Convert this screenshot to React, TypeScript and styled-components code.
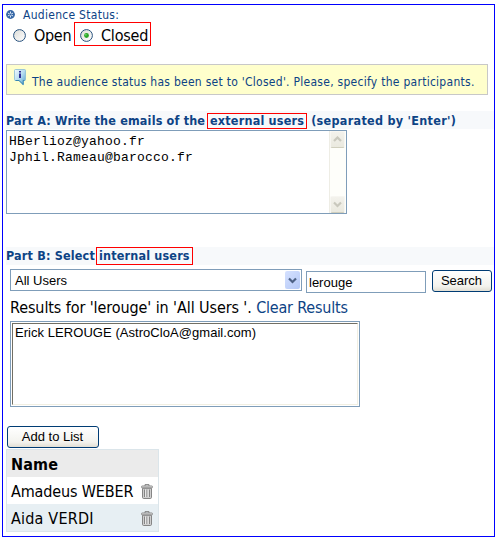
import React from 'react';
import styled, { createGlobalStyle } from 'styled-components';

const GlobalStyle = createGlobalStyle`
  * { box-sizing: border-box; }
  body { margin: 0; background: #fff; }
`;

const ui = '"DejaVu Sans Condensed", "DejaVu Sans", Tahoma, sans-serif';
const control = '"Liberation Sans", Arial, sans-serif';

const Frame = styled.main`
  width: 493px;
  height: 533px;
  margin: 4px 0 0 2px;
  border: 1px solid #0000ff;
  padding-left: 3px;
  overflow: hidden;
  font-family: ${ui};
  font-stretch: condensed;
  color: #000;
  white-space: pre;
`;

const StatusLabel = styled.div`
  display: flex;
  align-items: center;
  height: 17px;
  margin-top: 1px;
  gap: 8px;
  color: #0d4385;
`;

const Text = styled.span<{ $size?: number; $track?: number; $bold?: boolean; $link?: boolean }>`
  font-size: ${(p) => p.$size ?? 16}px;
  letter-spacing: ${(p) => p.$track ?? 0}px;
  font-weight: ${(p) => (p.$bold ? 700 : 400)};
  ${(p) => p.$link && 'color: #0d4385;'}
`;

const RadioRow = styled.div`
  display: flex;
  align-items: flex-start;
  height: 25px;
  margin-top: -1px;
  padding-left: 7px;
`;

const RadioOption = styled.label<{ $marked?: boolean; $width: number }>`
  display: flex;
  align-items: center;
  gap: 8px;
  width: ${(p) => p.$width}px;
  height: ${(p) => (p.$marked ? 24 : 27)}px;
  ${(p) => p.$marked && 'border: 1px solid #f00; padding: 3px 0 0 5px;'}
`;

const Notice = styled.section`
  display: flex;
  width: 482px;
  height: 31px;
  margin-top: 17px;
  padding: 4px 0 0 7px;
  gap: 5px;
  background: #ffffcc;
  border: 1px solid #c8c8c8;
  color: #0d4385;
  line-height: 26px;
`;

const Heading = styled.h2<{ $top: number; $height: number }>`
  display: flex;
  align-items: flex-end;
  width: 488px;
  height: ${(p) => p.$height}px;
  margin: ${(p) => p.$top}px 0 0;
  background: #f7f9fb;
  color: #0d4385;
  line-height: 16px;
`;

const Marked = styled.span<{ $width: number; $height: number }>`
  display: flex;
  align-items: center;
  width: ${(p) => p.$width}px;
  height: ${(p) => p.$height}px;
  padding-left: 2px;
  border: 1px solid #f00;
`;

const HeadPart = styled.span<{ $width?: number; $lift?: number }>`
  display: flex;
  height: ${(p) => 16 + (p.$lift ?? 0)}px;
  ${(p) => p.$width && `width: ${p.$width}px;`}
`;

const EmailBox = styled.div`
  display: flex;
  justify-content: space-between;
  width: 341px;
  height: 84px;
  margin-top: 1px;
  border: 1px solid #7f9db9;
`;

const Emails = styled.div`
  padding: 3px 0 0 2px;
  font: 13px/16px "Liberation Mono", "Courier New", monospace;
  letter-spacing: 0.2px;
`;

const ScrollTrack = styled.div`
  display: flex;
  flex-direction: column;
  justify-content: space-between;
  width: 17px;
  background: #fefefa;
  border-left: 1px solid #eeede5;
`;

const ScrollButton = styled.div`
  display: flex;
  align-items: center;
  justify-content: center;
  width: 15px;
  height: 17px;
  background: linear-gradient(#f3f2ec, #eae9df);
  border: 1px solid #f7f6f1;
  border-bottom-color: #d0cfbe;
  border-radius: 2px;
`;

const SearchRow = styled.div`
  display: flex;
  align-items: flex-start;
  height: 24px;
  margin-top: 4px;
  padding-left: 4px;
  font: 13px/20px ${control};
`;

const Select = styled.div`
  display: flex;
  justify-content: space-between;
  width: 292px;
  height: 22px;
  border: 1px solid #7f9db9;
  padding: 1px 1px 1px 4px;
`;

const SelectArrow = styled.span`
  display: flex;
  align-items: center;
  justify-content: center;
  width: 15px;
  height: 18px;
  border-radius: 2px;
  background: linear-gradient(135deg, #d5e1ff, #b4c8f6);
`;

const SearchField = styled.div`
  width: 120px;
  height: 22px;
  margin: 2px 6px 0 4px;
  padding: 1px 0 0 2px;
  border: 1px solid #7f9db9;
`;

const Button = styled.button<{ $width: number; $top: number }>`
  display: block;
  width: ${(p) => p.$width}px;
  height: 22px;
  margin: ${(p) => p.$top}px 0 0;
  padding: 0 1px 0 0;
  font: 13px/18px ${control};
  color: #000;
  border: 1px solid #003c74;
  border-radius: 3px;
  background: linear-gradient(#fff, #f3f3ee 75%, #e2dfd4);
`;

const Results = styled.div`
  height: 28px;
  padding-left: 4px;
  line-height: 30px;
`;

const ListBox = styled.div`
  width: 350px;
  height: 86px;
  margin: 0 0 19px 4px;
  padding: 1px;
  border: 1px solid #7f9db9;
`;

const ListInner = styled.div`
  height: 82px;
  padding: 0 0 0 2px;
  border: 1px solid #716f64;
  border-right-color: #f1efe2;
  border-bottom-color: #f1efe2;
  font: 13px/17px ${control};
  letter-spacing: 0.05px;
`;

const AddArea = styled.div`
  padding-left: 1px;
`;

const People = styled.div`
  width: 153px;
  height: 83px;
  margin-top: 1px;
  border: 1px solid #dbe5ea;
`;

const PersonRow = styled.div<{ $bg: string }>`
  display: flex;
  align-items: center;
  justify-content: space-between;
  height: 27px;
  padding: 1px 5px 0 4px;
  background: ${(p) => p.$bg};
`;

const Bullet = () => (
  <svg width="9" height="9" viewBox="0 0 9 9">
    <circle cx="4.5" cy="4.5" r="4.4" fill="#3566a5" />
    <path d="M4.5 1.5v6M1.9 3l5.2 3M7.1 3L1.9 6" stroke="#dce7f5" strokeWidth="1" />
    <circle cx="4.5" cy="4.5" r="1" fill="#3566a5" />
  </svg>
);

const Radio = ({ on }: { on?: boolean }) => (
  <svg width="13" height="13" viewBox="0 0 13 13">
    <defs>
      <linearGradient id="radioFace" x1="0" y1="0" x2="1" y2="1">
        <stop offset="0" stopColor="#dcdcd7" />
        <stop offset="1" stopColor="#fff" />
      </linearGradient>
    </defs>
    <circle cx="6.5" cy="6.5" r="5.9" fill="url(#radioFace)" stroke="#28527e" strokeWidth="1" />
    {on && <circle cx="6.5" cy="6.5" r="2.4" fill="#29a526" />}
    {on && <circle cx="5.8" cy="5.8" r="1" fill="#5fd15b" />}
  </svg>
);

const InfoIcon = () => (
  <svg width="13" height="17" viewBox="0 0 13 17">
    <defs>
      <linearGradient id="infoFace" x1="0" y1="0" x2="1" y2="1">
        <stop offset="0" stopColor="#f2faff" />
        <stop offset=".5" stopColor="#b5dcf0" />
        <stop offset="1" stopColor="#4d9cc8" />
      </linearGradient>
    </defs>
    <path d="M1.500 .5h9q1 0 1 1v9q0 1-1 1H9.300V16L5 11.500H1.500q-1 0-1-1v-9q0-1 1-1z" fill="url(#infoFace)" stroke="#86bbd6" strokeWidth=".8" />
    <path d="M1.500 11.500H5l4.200 4v-4h1.300" fill="none" stroke="#2c7fae" strokeWidth=".9" />
    <path d="M5 2h2v1.500H5zM5 4.500h2v4.500H5z" fill="#2f2f94" />
  </svg>
);

const Chevron = ({ up, color }: { up?: boolean; color: string }) => (
  <svg width="9" height="7" viewBox="0 0 9 7">
    <path d={up ? 'M1 5l3.500-3.500L8 5' : 'M1 1.500L4.500 5 8 1.500'} fill="none" stroke={color} strokeWidth="2.200" />
  </svg>
);

const Trash = () => (
  <svg width="12" height="15" viewBox="0 0 12 15">
    <path d="M4 2V.6h4V2" fill="none" stroke="#858585" />
    <rect x=".5" y="1.900" width="11" height="2" rx=".7" fill="#d0d0d0" stroke="#858585" strokeWidth=".8" />
    <path d="M1.500 4.300h9v9q0 1.200-1.200 1.200H2.700q-1.200 0-1.200-1.200z" fill="#cfcfcf" stroke="#858585" />
    <path d="M3.500 5.500v7.500M6 5.500v7.500M8.500 5.500v7.500" stroke="#7c7c7c" strokeWidth=".9" />
    <path d="M4.500 5.500v7.500M7 5.500v7.500" stroke="#eee" strokeWidth=".8" />
  </svg>
);

export default function App() {
  return (
    <>
      <GlobalStyle />
      <Frame>
        <StatusLabel>
          <Bullet />
          <Text $size={12} $track={0.28}>Audience Status:</Text>
        </StatusLabel>
        <RadioRow>
          <RadioOption $width={61}><Radio /><Text $track={-0.3}>Open</Text></RadioOption>
          <RadioOption $marked $width={77}><Radio on /><Text $track={-0.2}>Closed</Text></RadioOption>
        </RadioRow>
        <Notice>
          <InfoIcon />
          <Text $size={12} $track={0.27}>The audience status has been set to 'Closed'. Please, specify the participants.</Text>
        </Notice>
        <Heading $top={16} $height={18}>
          <HeadPart $width={201}><Text $bold $size={12.5} $track={0.17}>Part A: Write the emails of the</Text></HeadPart>
          <Marked $width={100} $height={16}><Text $bold $size={12.5} $track={0.2}>external users</Text></Marked>
          <HeadPart><Text $bold $size={12.5} $track={0.28}>{" (separated by 'Enter')"}</Text></HeadPart>
        </Heading>
        <EmailBox>
          <Emails>{'HBerlioz@yahoo.fr\nJphil.Rameau@barocco.fr'}</Emails>
          <ScrollTrack>
            <ScrollButton><Chevron up color="#c9c8bd" /></ScrollButton>
            <ScrollButton><Chevron color="#c9c8bd" /></ScrollButton>
          </ScrollTrack>
        </EmailBox>
        <Heading $top={33} $height={18}>
          <HeadPart $width={90} $lift={1}><Text $bold $size={12.5} $track={0.17}>Part B: Select</Text></HeadPart>
          <Marked $width={97} $height={18}><Text $bold $size={12.5} $track={0.17}>internal users</Text></Marked>
        </Heading>
        <SearchRow>
          <Select>All Users<SelectArrow><Chevron color="#4d6185" /></SelectArrow></Select>
          <SearchField>lerouge</SearchField>
          <Button $width={60} $top={1}>Search</Button>
        </SearchRow>
        <Results>
          <Text $track={-0.09}>Results for 'lerouge' in 'All Users '. </Text>
          <Text $link $track={-0.2}>Clear Results</Text>
        </Results>
        <ListBox><ListInner>Erick LEROUGE (AstroCloA@gmail.com)</ListInner></ListBox>
        <AddArea><Button $width={92} $top={0}>Add to List</Button></AddArea>
        <People>
          <PersonRow $bg="#ebebeb"><Text $bold $track={0.15}>Name</Text></PersonRow>
          <PersonRow $bg="#fff"><Text $track={-0.15}>Amadeus WEBER</Text><Trash /></PersonRow>
          <PersonRow $bg="#e7eff3"><Text $track={0.2}>Aida VERDI</Text><Trash /></PersonRow>
        </People>
      </Frame>
    </>
  );
}
